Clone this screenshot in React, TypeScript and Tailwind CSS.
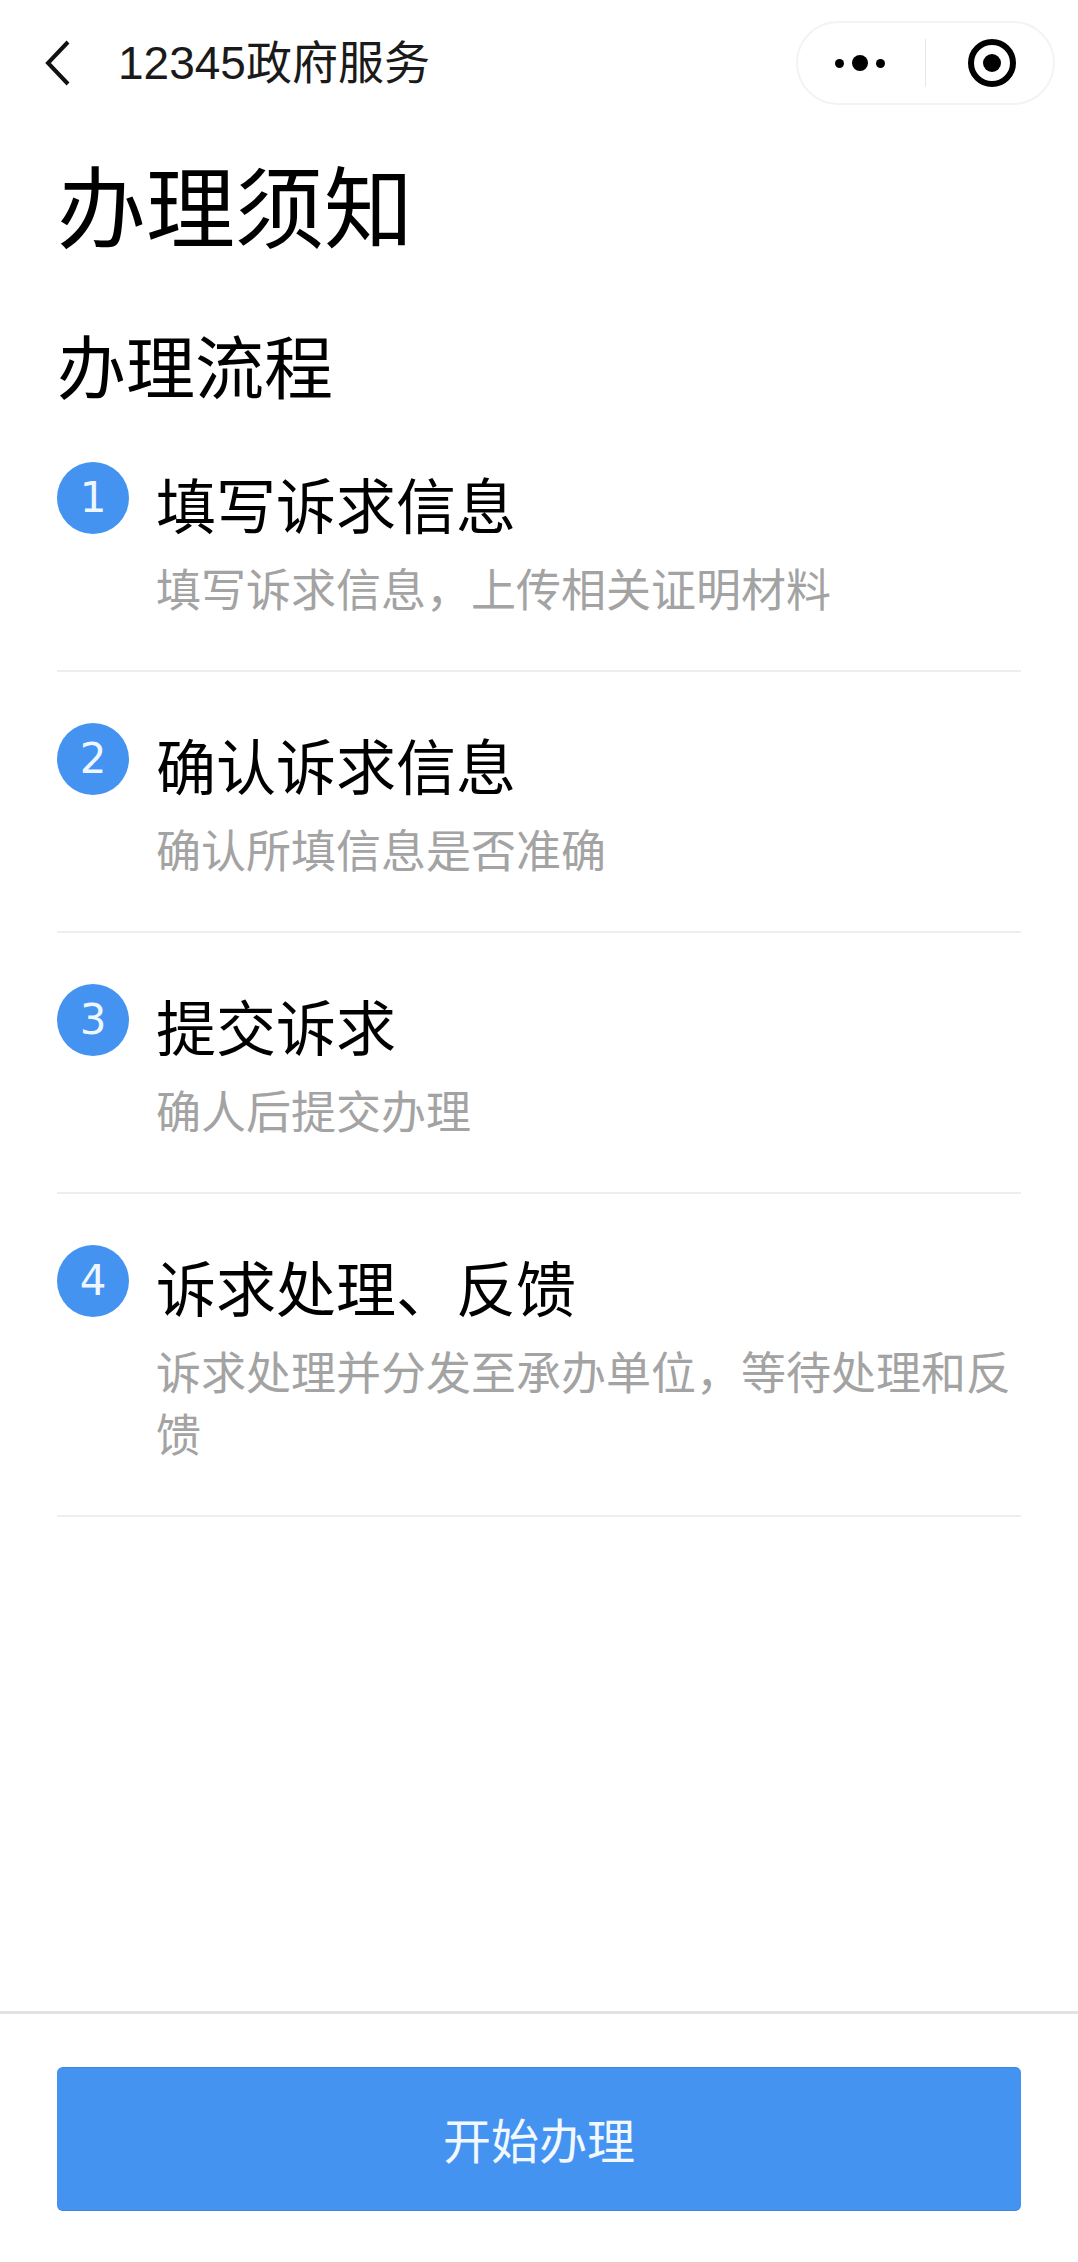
const font = "font-['Liberation_Sans','Noto_Sans_CJK_SC',sans-serif]";

const steps = [
  { n: 1, title: "填写诉求信息", desc: "填写诉求信息，上传相关证明材料" },
  { n: 2, title: "确认诉求信息", desc: "确认所填信息是否准确" },
  { n: 3, title: "提交诉求", desc: "确人后提交办理" },
  { n: 4, title: "诉求处理、反馈", desc: "诉求处理并分发至承办单位，等待处理和反馈" },
];

function NavBar() {
  return (
    <div className="flex h-[126px] items-center pl-[44px] pr-[23px]">
      <svg width="28" height="46" viewBox="0 0 28 46" fill="none" className="shrink-0">
        <path d="M24 2 L4 23 L24 44" stroke="#111" strokeWidth="4" />
      </svg>
      <div className="ml-[46px] text-[46px] leading-none text-[#1a1a1a]">12345政府服务</div>
      <div className="ml-auto flex h-[84px] w-[259px] items-center rounded-[42px] border-2 border-[#f3f3f3]">
        <div className="flex w-[127px] items-center justify-center gap-[8px] pr-[3px]">
          <span className="size-[9px] rounded-full bg-black" />
          <span className="size-[16px] rounded-full bg-black" />
          <span className="size-[9px] rounded-full bg-black" />
        </div>
        <div className="h-[48px] w-px bg-[#e6e6e6]" />
        <div className="flex flex-1 items-center justify-center pl-[4px]">
          <div className="flex size-[48px] items-center justify-center rounded-full border-[6px] border-black">
            <span className="size-[18px] rounded-full bg-black" />
          </div>
        </div>
      </div>
    </div>
  );
}

function Step({ n, title, desc }: { n: number; title: string; desc: string }) {
  return (
    <div className="flex items-start border-b-2 border-[#eeeeee] pt-[51px] pb-[47px]">
      <div className="flex size-[72px] shrink-0 items-center justify-center rounded-full bg-[#4493f1] font-['DejaVu_Sans',sans-serif] text-[42px] leading-none text-[#eef6ff]">
        {n}
      </div>
      <div className="ml-[27px] min-w-0 flex-1 pt-[7px]">
        <div className="text-[60px] leading-[80px] text-black">{title}</div>
        <div className="mt-[12px] text-[45px] leading-[62px] text-[#a3a3a3]">{desc}</div>
      </div>
    </div>
  );
}

export default function App() {
  return (
    <div className={`flex h-[2262px] w-[1078px] flex-col overflow-hidden bg-white ${font}`}>
      <NavBar />
      <div className="flex-1 px-[57px]">
        <h1 className="mt-[34px] text-[89px] leading-[100px] font-normal text-black">办理须知</h1>
        <h2 className="mt-[71px] text-[69px] leading-[80px] font-normal text-black">办理流程</h2>
        <div>
          {steps.map((s) => (
            <Step key={s.n} n={s.n} title={s.title} desc={s.desc} />
          ))}
        </div>
      </div>
      <div className="h-[251px] border-t-[3px] border-[#e2e2e2] px-[57px] pt-[53px]">
        <button className="flex h-[144px] w-full items-center justify-center rounded-[6px] border-y border-[#3f86dc] bg-[#4493f1] pt-[8px] text-[48px] text-[#f2f8ff]">
          开始办理
        </button>
      </div>
    </div>
  );
}
